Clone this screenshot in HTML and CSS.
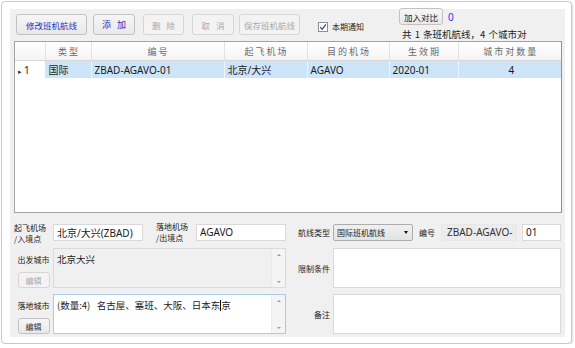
FILE: index.html
```html
<!DOCTYPE html>
<html lang="zh-CN">
<head>
    <meta charset="UTF-8">
    <meta name="viewport" content="width=device-width, initial-scale=1.0">
    <title>班机航线</title>
    <link rel="stylesheet" href="styles.css">
</head>
<body>

    <div class="window">
        <div class="panel">
            <div class="toolbar">
                <button class="btn btn-edit">修改班机航线</button>
                <button class="btn btn-add btn-spaced">添加</button>
                <button class="btn btn-del btn-spaced" disabled>删除</button>
                <button class="btn btn-cancel btn-spaced" disabled>取消</button>
                <button class="btn btn-save" disabled>保存班机航线</button>
                <label class="notice">
                    <span class="check">
                        <svg width="8" height="8" viewBox="0 0 8 8"><path d="M1.2 4.2 L3.2 6.3 L6.8 1.4" fill="none" stroke="#2a3f8f" stroke-width="1.2"/></svg>
                    </span>
                    本期通知
                </label>
                <div class="compare">
                    <div class="compare-top">
                        <button class="btn btn-compare">加入对比</button>
                        <span class="count">0</span>
                    </div>
                    <div class="summary">共 1 条班机航线，4 个城市对</div>
                </div>
            </div>

            <div class="grid-wrap">
                <table class="grid">
                    <colgroup>
                        <col style="width:30px">
                        <col style="width:46px">
                        <col style="width:133px">
                        <col style="width:83px">
                        <col style="width:82px">
                        <col style="width:69px">
                        <col>
                    </colgroup>
                    <thead>
                        <tr>
                            <th></th>
                            <th>类型</th>
                            <th>编号</th>
                            <th>起飞机场</th>
                            <th>目的机场</th>
                            <th>生效期</th>
                            <th>城市对数量</th>
                        </tr>
                    </thead>
                    <tbody>
                        <tr class="selected">
                            <td class="row-head"><span class="arrow">&#9656;</span>1</td>
                            <td>国际</td>
                            <td>ZBAD-AGAVO-01</td>
                            <td>北京/大兴</td>
                            <td>AGAVO</td>
                            <td>2020-01</td>
                            <td class="center">4</td>
                        </tr>
                    </tbody>
                </table>
            </div>

            <div class="form">
                <div class="label label-two">起飞机场<br>/入境点</div>
                <div class="field-row">
                    <input class="text w-airport" type="text" value="北京/大兴(ZBAD)">
                    <div class="label label-two label-land">落地机场<br>/出境点</div>
                    <input class="text w-airport" type="text" value="AGAVO">
                </div>
                <div class="label label-right">航线类型</div>
                <div class="field-row">
                    <div class="select">
                        <span>国际班机航线</span>
                        <span class="caret"></span>
                    </div>
                    <div class="label label-no">编号</div>
                    <div class="text readonly w-code">ZBAD-AGAVO-</div>
                    <input class="text w-seq" type="text" value="01">
                </div>

                <div class="city-label">
                    <div class="label">出发城市</div>
                    <button class="btn btn-small" disabled>编辑</button>
                </div>
                <div class="area area-disabled">
                    <div class="area-text">北京大兴</div>
                    <div class="scroll"><span class="up"></span><span class="down"></span></div>
                </div>
                <div class="label label-right">限制条件</div>
                <div class="area">
                    <div class="area-text"></div>
                </div>

                <div class="city-label">
                    <div class="label">落地城市</div>
                    <button class="btn btn-small">编辑</button>
                </div>
                <div class="area area-focus">
                    <div class="area-text">(数量:4)&nbsp;&nbsp;&nbsp;名古屋、塞班、大阪、日本东<span class="cursor"></span>京</div>
                    <div class="scroll"><span class="up"></span><span class="down"></span></div>
                </div>
                <div class="label label-right">备注</div>
                <div class="area">
                    <div class="area-text"></div>
                </div>
            </div>
        </div>
    </div>

</body>
</html>
```

FILE: styles.css
```css
body {
    margin: 0;
    background-color: #ffffff;
    font-family: "Noto Sans", "Noto Sans CJK SC", sans-serif;
    color: #1a1a1a;
}
.window {
    width: 571px;
    height: 343px;
    margin: 1px 0 0 1px;
    padding: 7px 6px 6px 8px;
    box-sizing: border-box;
    border: 1px solid #c9c9c9;
    border-radius: 4px;
    box-shadow: 1px 1px 2px rgba(0, 0, 0, 0.12);
    background-color: #ffffff;
}
.panel {
    height: 328px;
    padding: 0 3px 0 4px;
    background-color: #f0f0f0;
}

/* toolbar */
.toolbar {
    display: flex;
    align-items: flex-start;
    height: 32px;
}
.btn {
    font-family: "Noto Sans CJK SC", sans-serif;
    font-size: 8.5px;
    padding: 0;
    height: 21px;
    border: 1px solid #c2c2c2;
    border-radius: 3px;
    background: linear-gradient(#f6f6f6, #e8e8e8);
    color: #2f2fbf;
    cursor: pointer;
}
.btn:disabled {
    border-color: #d6d6d6;
    background: #f3f3f3;
    color: #a9a9a9;
}
.btn-spaced {
    letter-spacing: 6px;
    text-indent: 6px;
}
.toolbar > .btn {
    margin-top: 5px;
}
.btn-edit {
    width: 71px;
    margin-left: 2px;
}
.btn-add {
    width: 42px;
    margin-left: 6px;
    font-size: 9px;
}
.btn-del {
    width: 41px;
    margin-left: 8px;
}
.btn-cancel {
    width: 42px;
    margin-left: 8px;
}
.btn-save {
    width: 61px;
    margin-left: 5px;
}
.notice {
    display: flex;
    align-items: center;
    margin: 12px 0 0 18px;
    font-family: "Noto Sans CJK SC", sans-serif;
    font-size: 8px;
    color: #222;
}
.check {
    display: inline-flex;
    align-items: center;
    justify-content: center;
    width: 8px;
    height: 8px;
    margin-right: 4px;
    border: 1px solid #8e8f8f;
    background-color: #fff;
}
.compare {
    margin-left: 35px;
    margin-top: -1px;
}
.compare-top {
    display: flex;
    align-items: center;
}
.btn-compare {
    width: 44px;
    height: 17px;
    color: #222;
}
.count {
    margin-left: 5px;
    font-size: 10px;
    color: #3333ee;
}
.summary {
    margin: 2px 0 0 3px;
    font-family: "Noto Sans CJK SC", sans-serif;
    font-size: 9.5px;
    word-spacing: 1px;
    color: #222;
}

/* grid */
.grid-wrap {
    height: 172px;
    box-sizing: border-box;
    border: 1px solid #a3a3a3;
    border-right-color: #8f9095;
    background-color: #ffffff;
}
.grid {
    width: 100%;
    border-collapse: collapse;
    table-layout: fixed;
    font-size: 10px;
}
.grid th {
    height: 18px;
    padding: 0;
    font-family: "Noto Sans CJK SC", sans-serif;
    font-weight: normal;
    font-size: 9px;
    letter-spacing: 2px;
    text-indent: 2px;
    color: #6b6b6b;
    background: linear-gradient(#ffffff, #f4f4f4);
    border-right: 1px solid #e2e2e2;
    border-bottom: 1px solid #d8d8d8;
}
.grid th:last-child {
    border-right: none;
}
.grid td {
    height: 17px;
    padding: 0 0 0 3px;
    border-right: 1px solid #eef4fb;
    white-space: nowrap;
    overflow: hidden;
}
.grid td:last-child {
    border-right: none;
}
.selected td {
    background-color: #cde4f9;
}
.selected td.row-head {
    background-color: #ffffff;
    border-right: 1px solid #e2e2e2;
    padding-left: 3px;
}
.arrow {
    font-size: 7px;
    margin-right: 2px;
    color: #333;
}
.center {
    text-align: center;
}

/* form */
.form {
    display: grid;
    grid-template-columns: 39px 233px 7px 40px 228px;
    grid-template-rows: 20px 40px 40px;
    row-gap: 6px;
    margin-top: 9px;
}
.form > :nth-child(3),
.form > :nth-child(7),
.form > :nth-child(11) {
    grid-column: 4;
}
.label {
    font-family: "Noto Sans CJK SC", sans-serif;
    font-size: 8px;
    color: #222;
    white-space: nowrap;
}
.label-two {
    line-height: 11px;
}
.label-right {
    display: flex;
    align-items: center;
    justify-content: flex-end;
    padding-right: 3px;
}
.field-row {
    display: flex;
    align-items: center;
}
.text {
    box-sizing: border-box;
    height: 17px;
    padding: 0 3px;
    border: 1px solid #d9d9d9;
    background-color: #ffffff;
    font-family: "Noto Sans", "Noto Sans CJK SC", sans-serif;
    font-size: 10px;
    color: #1a1a1a;
    outline: none;
    white-space: nowrap;
}
.w-airport {
    width: 90px;
}
.label-land {
    width: 53px;
    box-sizing: border-box;
    padding-left: 13px;
}
.select {
    display: flex;
    align-items: center;
    justify-content: space-between;
    box-sizing: border-box;
    width: 80px;
    height: 17px;
    padding: 0 4px 0 3px;
    border: 1px solid #adadad;
    border-radius: 2px;
    background: linear-gradient(#f0f0f0, #e3e3e3);
    font-family: "Noto Sans CJK SC", sans-serif;
    font-size: 8px;
    color: #222;
}
.caret {
    width: 0;
    height: 0;
    border-left: 2.5px solid transparent;
    border-right: 2.5px solid transparent;
    border-top: 3px solid #111;
}
.label-no {
    width: 28px;
    box-sizing: border-box;
    padding-left: 6px;
}
.readonly {
    display: flex;
    align-items: center;
    width: 76px;
    padding-left: 5px;
    border-color: #e8e8e8;
    background-color: #ececec;
    color: #333;
    overflow: hidden;
}
.w-seq {
    width: 39px;
    margin-left: 5px;
}
.city-label {
    display: flex;
    flex-direction: column;
    align-items: center;
    padding-top: 6px;
}
.btn-small {
    width: 32px;
    height: 16px;
    margin-top: 7px;
    color: #333;
    font-size: 8px;
}
.area {
    display: flex;
    box-sizing: border-box;
    border: 1px solid #dadada;
    background-color: #ffffff;
}
.area-disabled {
    background-color: #f0f0f0;
}
.area-focus {
    border-color: #a8cbec;
}
.area-text {
    flex: 1;
    padding: 3px 3px;
    font-family: "Noto Sans CJK SC", sans-serif;
    font-size: 9.5px;
    color: #222;
}
.cursor {
    display: inline-block;
    width: 1px;
    height: 11px;
    margin-bottom: -2px;
    background-color: #111;
}
.scroll {
    display: flex;
    flex-direction: column;
    justify-content: space-between;
    align-items: center;
    width: 14px;
    padding: 5px 0 4px;
    box-sizing: border-box;
    border-left: 1px solid #ececec;
    background-color: #f4f4f4;
}
.up {
    border-left: 2px solid transparent;
    border-right: 2px solid transparent;
    border-bottom: 2px solid #9a9a9a;
}
.down {
    border-left: 2px solid transparent;
    border-right: 2px solid transparent;
    border-top: 2px solid #9a9a9a;
}
```
